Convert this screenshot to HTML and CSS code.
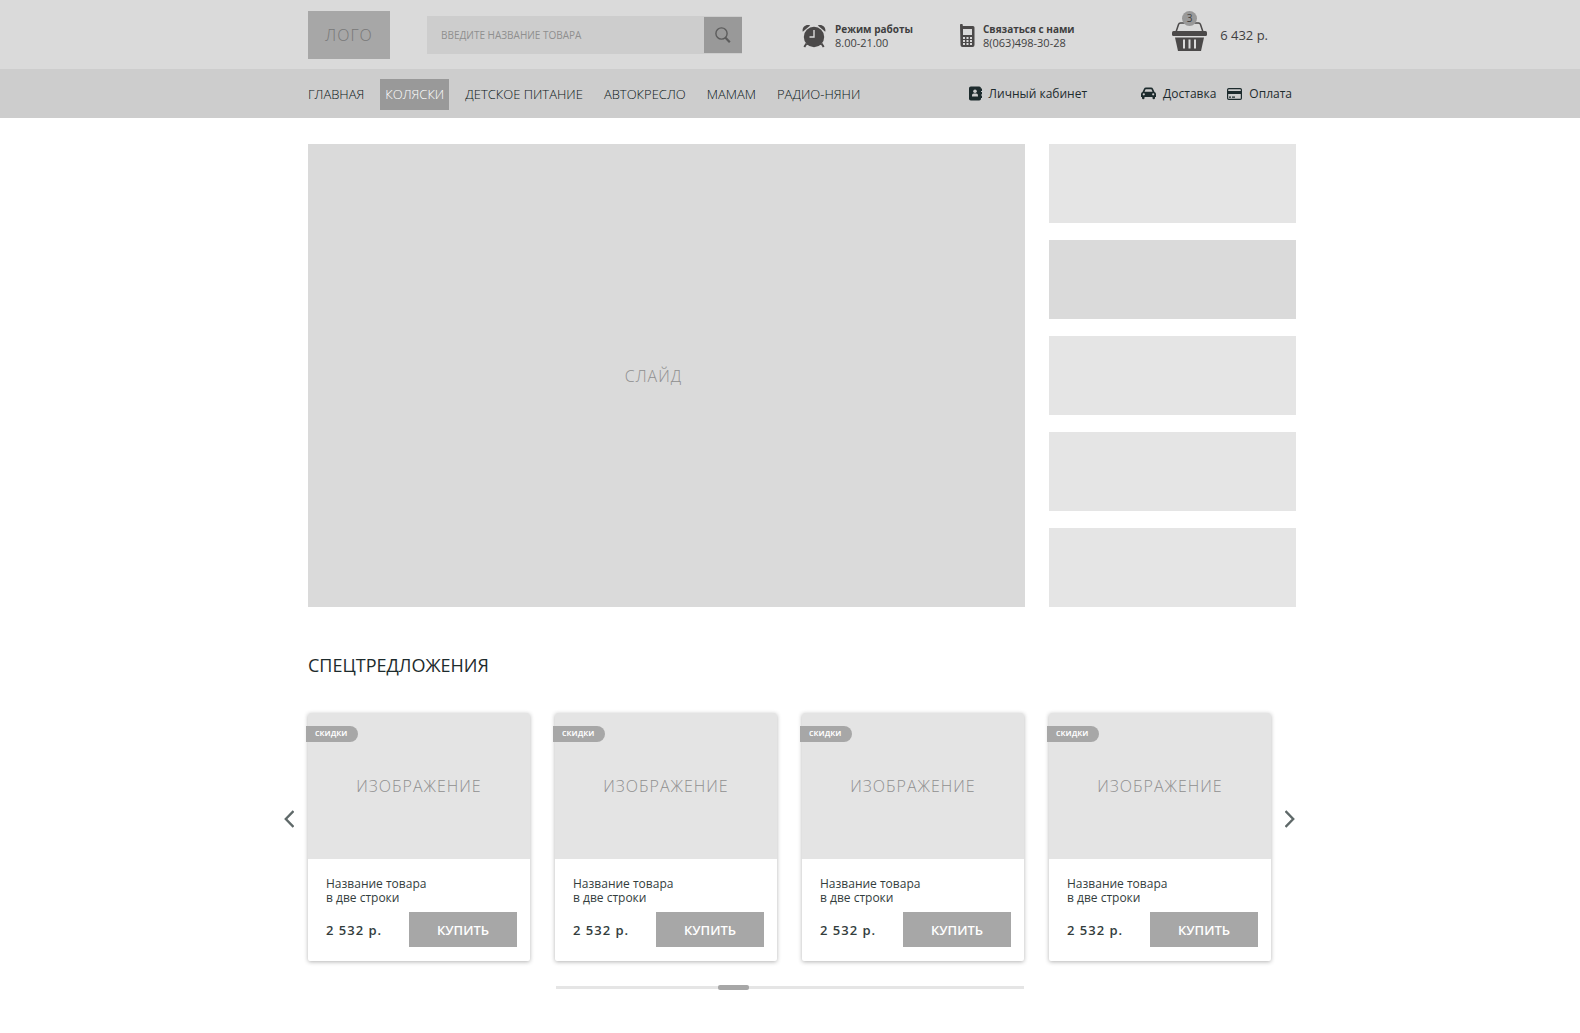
FILE: index.html
```html
<!DOCTYPE html>
<html lang="ru">

<head>
    <meta charset="UTF-8" />
    <meta name="viewport" content="width=device-width, initial-scale=1.0" />
    <title>Магазин детских товаров</title>
    <link rel="stylesheet" href="styles.css">
</head>

<body>
    <header class="header">
        <div class="container header-inner">
            <a href="#" class="logo">ЛОГО</a>

            <form class="search">
                <input type="text" name="q" class="search-input" placeholder="ВВЕДИТЕ НАЗВАНИЕ ТОВАРА" aria-label="Поиск" />
                <button type="submit" class="search-btn" aria-label="Найти">
                    <svg width="16" height="17" viewBox="0 0 16 17" fill="none" stroke="#5c5c5c">
                        <circle cx="6.5" cy="6.5" r="5.6" stroke-width="1.4" />
                        <path d="M10.5 10.7l4.3 4.6" stroke-width="2.2" />
                    </svg>
                </button>
            </form>

            <div class="info info-time">
                <svg width="24" height="24" viewBox="0 0 24 24" fill="#4b4949">
                    <circle cx="12" cy="13" r="10.200" />
                    <path d="M.8 7.800C-.4 3.600 3.600-.4 8.200 1.400zM23.200 7.800C24.400 3.600 20.400-.4 15.800 1.400z" />
                    <path d="M4.500 19.500L2.300 23M19.500 19.500l2.200 3.500" stroke="#4b4949" stroke-width="2" />
                    <path d="M12 6v7H7.500" fill="none" stroke="#dadada" stroke-width="1.400" />
                </svg>
                <div class="info-text">
                    <b>Режим работы</b>
                    <span>8.00-21.00</span>
                </div>
            </div>

            <div class="info info-phone">
                <svg width="15" height="24" viewBox="0 0 15 24" fill="#4b4949">
                    <path d="M0 1.200a1.200 1.200 0 0 1 2.800 0V2H13a1.500 1.500 0 0 1 1.500 1.500V21a2 2 0 0 1-2 2H2.500a2 2 0 0 1-2-2z" />
                    <path d="M3 5h9v6H3z" fill="#dadada" />
                    <path d="M3 13h2v2H3zM6.500 13h2v2h-2zM10 13h2v2h-2zM3 16h2v2H3zM6.500 16h2v2h-2zM10 16h2v2h-2zM3 19h2v2H3zM6.500 19h2v2h-2zM10 19h2v2h-2z" fill="#dadada" />
                </svg>
                <div class="info-text">
                    <b>Связаться с нами</b>
                    <span>8(063)498-30-28</span>
                </div>
            </div>

            <a href="#" class="cart">
                <span class="cart-icon">
                    <svg width="35" height="30" viewBox="0 0 35 30" fill="#4b4949">
                        <path d="M4 10L6.500 2.500Q7 1 8.500 1h18q1.500 0 2 1.500L31 10" fill="none" stroke="#4b4949" stroke-width="1.500" />
                        <rect y="9" width="35" height="5" rx="1.500" />
                        <path d="M3 15.500h29L29 29H6z" />
                        <path d="M12 17.500v9M17.500 17.500v9M23 17.500v9" stroke="#dadada" stroke-width="2" />
                    </svg>
                    <span class="cart-count">3</span>
                </span>
                <span>6 432 р.</span>
            </a>
        </div>
    </header>

    <nav class="nav">
        <div class="container nav-inner">
            <div class="menu">
                <a href="#">ГЛАВНАЯ</a>
                <a href="#" class="active">КОЛЯСКИ</a>
                <a href="#">ДЕТСКОЕ ПИТАНИЕ</a>
                <a href="#">АВТОКРЕСЛО</a>
                <a href="#">МАМАМ</a>
                <a href="#">РАДИО-НЯНИ</a>
            </div>
            <div class="links">
                <a href="#" class="account">
                    <svg width="13" height="15" viewBox="0 0 13 15">
                        <rect width="12" height="14" y=".5" rx="1.800" fill="#1d2b2d" />
                        <path d="M12 2.500h1v2.500h-1zM12 6h1v2.500h-1zM12 9.500h1V12h-1z" fill="#1d2b2d" />
                        <circle cx="6" cy="5.200" r="1.800" fill="#cdcdcd" />
                        <path d="M3 10.500V9.300Q3 7.500 4.800 7.500h2.400Q9 7.500 9 9.300v1.200z" fill="#cdcdcd" />
                    </svg>
                    Личный кабинет
                </a>
                <a href="#">
                    <svg width="15" height="13" viewBox="0 0 15 13">
                        <path d="M1.500 5L3 1.700Q3.500.5 5 .5h5q1.500 0 2 1.200L13.500 5Q15 5.500 15 7v3h-1v1a1.200 1.200 0 0 1-2.500 0v-1h-8v1A1.200 1.200 0 0 1 1 11v-1H0V7Q0 5.500 1.500 5z" fill="#1d2b2d" />
                        <path d="M3.500 4.800L4.600 2.300h5.800l1.100 2.500z" fill="#cdcdcd" />
                        <circle cx="2.800" cy="7.300" r="1.100" fill="#cdcdcd" />
                        <circle cx="12.200" cy="7.300" r="1.100" fill="#cdcdcd" />
                    </svg>
                    Доставка
                </a>
                <a href="#">
                    <svg width="15" height="12" viewBox="0 0 15 12">
                        <rect x=".6" y=".6" width="13.800" height="10.800" rx="1.200" fill="none" stroke="#1d2b2d" stroke-width="1.200" />
                        <path d="M0 3h15v3H0zM2 8.500h2v1.200H2zM5 8.500h3v1.200H5z" fill="#1d2b2d" />
                    </svg>
                    Оплата
                </a>
            </div>
        </div>
    </nav>

    <main>
        <section class="container promo">
            <div class="slide">СЛАЙД</div>
            <div class="banners">
                <a href="#" aria-label="Баннер 1"></a>
                <a href="#" class="current" aria-label="Баннер 2"></a>
                <a href="#" aria-label="Баннер 3"></a>
                <a href="#" aria-label="Баннер 4"></a>
                <a href="#" aria-label="Баннер 5"></a>
            </div>
        </section>

        <section class="container offers">
            <h2>СПЕЦТРЕДЛОЖЕНИЯ</h2>
            <div class="carousel">
                <button type="button" class="arrow" aria-label="Назад">
                    <svg width="10" height="18" viewBox="0 0 10 18" fill="none" stroke="#5f6969" stroke-width="2.400">
                        <path d="M9.500 1L1.800 9l7.700 8" />
                    </svg>
                </button>
                <div class="cards">
                    <article class="card">
                        <span class="badge">скидки</span>
                        <div class="card-img">ИЗОБРАЖЕНИЕ</div>
                        <p class="card-name">Название товара<br>в две строки</p>
                        <div class="card-buy">
                            <span class="price">2 532 р.</span>
                            <button type="button" class="buy-btn">КУПИТЬ</button>
                        </div>
                    </article>
                    <article class="card">
                        <span class="badge">скидки</span>
                        <div class="card-img">ИЗОБРАЖЕНИЕ</div>
                        <p class="card-name">Название товара<br>в две строки</p>
                        <div class="card-buy">
                            <span class="price">2 532 р.</span>
                            <button type="button" class="buy-btn">КУПИТЬ</button>
                        </div>
                    </article>
                    <article class="card">
                        <span class="badge">скидки</span>
                        <div class="card-img">ИЗОБРАЖЕНИЕ</div>
                        <p class="card-name">Название товара<br>в две строки</p>
                        <div class="card-buy">
                            <span class="price">2 532 р.</span>
                            <button type="button" class="buy-btn">КУПИТЬ</button>
                        </div>
                    </article>
                    <article class="card">
                        <span class="badge">скидки</span>
                        <div class="card-img">ИЗОБРАЖЕНИЕ</div>
                        <p class="card-name">Название товара<br>в две строки</p>
                        <div class="card-buy">
                            <span class="price">2 532 р.</span>
                            <button type="button" class="buy-btn">КУПИТЬ</button>
                        </div>
                    </article>
                </div>
                <button type="button" class="arrow" aria-label="Вперёд">
                    <svg width="10" height="18" viewBox="0 0 10 18" fill="none" stroke="#5f6969" stroke-width="2.400">
                        <path d="M.5 1l7.700 8L.5 17" />
                    </svg>
                </button>
            </div>
            <input type="range" class="scroll" min="0" max="100" value="37" aria-label="Прокрутка товаров" />
        </section>
    </main>
</body>

</html>
```

FILE: styles.css
```css
* {
    box-sizing: border-box;
}

body {
    margin: 0;
    background: #fff;
    color: #1d2b2d;
    font-family: "Open Sans", sans-serif;
    font-size: 13px;
}

a {
    color: inherit;
    text-decoration: none;
}

button {
    border: none;
    padding: 0;
    font-family: inherit;
    cursor: pointer;
}

svg {
    display: block;
    flex: none;
}

.container {
    max-width: 1012px;
    margin: 0 auto;
    padding-left: 24px;
}

/* header */
.header {
    background: #dadada;
}

.header-inner {
    display: flex;
    align-items: center;
    height: 69px;
}

.logo {
    width: 82px;
    height: 48px;
    background: #a7a7a7;
    color: #777;
    font-size: 16px;
    font-weight: 300;
    letter-spacing: 1px;
    line-height: 48px;
    text-align: center;
}

.search {
    display: flex;
    align-items: center;
    width: 315px;
    height: 38px;
    margin-left: 37px;
    background: #cdcdcd;
}

.search-input {
    flex: 1;
    min-width: 0;
    height: 38px;
    padding: 0 14px;
    border: none;
    outline: none;
    background: none;
    font-family: inherit;
    font-size: 10px;
}

.search-input::placeholder {
    color: #8f8f8f;
}

.search-btn {
    display: flex;
    align-items: center;
    justify-content: center;
    width: 38px;
    height: 36px;
    padding-top: 2px;
    background: #999;
}

.info {
    display: flex;
    align-items: center;
    padding-top: 3px;
    color: #3f3f3f;
    font-size: 11px;
    line-height: 13px;
}

.info b {
    font-size: 10px;
}

.info-time {
    width: 158px;
    margin-left: 60px;
    gap: 9px;
}

.info-phone {
    gap: 8px;
}

.info-text {
    display: flex;
    flex-direction: column;
}

.cart {
    display: flex;
    align-items: center;
    gap: 13px;
    margin-left: auto;
    margin-right: 28px;
    color: #3f3f3f;
}

.cart-icon {
    position: relative;
    margin-top: 4px;
}

.cart-count {
    position: absolute;
    top: -11px;
    left: 10px;
    width: 15px;
    height: 15px;
    border-radius: 50%;
    background: #999;
    font-size: 10px;
    line-height: 15px;
    text-align: center;
}

/* nav */
.nav {
    background: #cdcdcd;
}

.nav-inner {
    display: flex;
    align-items: center;
    justify-content: space-between;
    height: 49px;
}

.menu {
    display: flex;
    gap: 11px;
    padding-top: 2px;
    color: #0b1718;
    font-weight: 300;
}

.menu a {
    padding: 0 5px;
    line-height: 31px;
}

.menu a:first-child {
    padding-left: 0;
}

.menu .active {
    background: #999;
    color: #fff;
}

.links {
    display: flex;
    gap: 11px;
    margin-right: 4px;
    font-size: 12px;
}

.links a {
    display: flex;
    align-items: center;
    gap: 7px;
}

.links .account {
    margin-right: 43px;
}

/* slider and banners */
.promo {
    display: grid;
    grid-template-columns: 1fr 247px;
    gap: 24px;
    margin-top: 26px;
}

.slide {
    display: flex;
    align-items: center;
    justify-content: center;
    padding-right: 26px;
    background: #dadada;
    color: #8f8f8f;
    font-size: 16px;
    font-weight: 300;
    letter-spacing: 1px;
}

.banners {
    display: grid;
    gap: 17px;
}

.banners a {
    height: 79px;
    background: #e5e5e5;
}

.banners .current {
    background: #dadada;
}

/* special offers */
.offers h2 {
    margin: 46px 0 36px;
    font-size: 18px;
    font-weight: 400;
    line-height: 24px;
}

.carousel {
    display: flex;
    align-items: center;
    gap: 14px;
    margin-left: -24px;
    padding-right: 1px;
}

.arrow {
    width: 10px;
    height: 40px;
    margin-bottom: 36px;
    background: none;
}

.cards {
    flex: 1;
    display: grid;
    grid-template-columns: repeat(4, 1fr);
    gap: 25px;
}

.card {
    position: relative;
    border-radius: 2px;
    background: #fff;
    box-shadow: 0 1px 4px rgba(0, 0, 0, 0.3);
}

.badge {
    position: absolute;
    top: 13px;
    left: -2px;
    width: 52px;
    height: 16px;
    padding-left: 9px;
    border-radius: 0 8px 8px 0;
    background: #a7a7a7;
    color: #fff;
    font-size: 9px;
    font-weight: 600;
    line-height: 14px;
}

.card-img {
    height: 146px;
    border-radius: 2px 2px 0 0;
    background: #e4e4e4;
    color: #8f8f8f;
    font-size: 16px;
    font-weight: 300;
    letter-spacing: 1px;
    line-height: 146px;
    text-align: center;
}

.card-name {
    margin: 18px 18px 7px;
    color: #333d3d;
    font-size: 12px;
    line-height: 14px;
}

.card-buy {
    display: flex;
    align-items: center;
    justify-content: space-between;
    padding: 0 13px 14px 18px;
}

.price {
    color: #333d3d;
    font-weight: 600;
    letter-spacing: 1px;
}

.buy-btn {
    width: 108px;
    height: 35px;
    background: #a7a7a7;
    color: #fff;
    font-size: 13px;
    font-weight: 600;
}

.scroll {
    -webkit-appearance: none;
    appearance: none;
    display: block;
    width: 468px;
    height: 5px;
    margin: 24px 0 40px 248px;
    background: linear-gradient(#e5e5e5, #e5e5e5) center / 100% 3px no-repeat;
}

.scroll::-webkit-slider-thumb {
    -webkit-appearance: none;
    width: 31px;
    height: 5px;
    border-radius: 2px;
    background: #a7a7a7;
}
```
